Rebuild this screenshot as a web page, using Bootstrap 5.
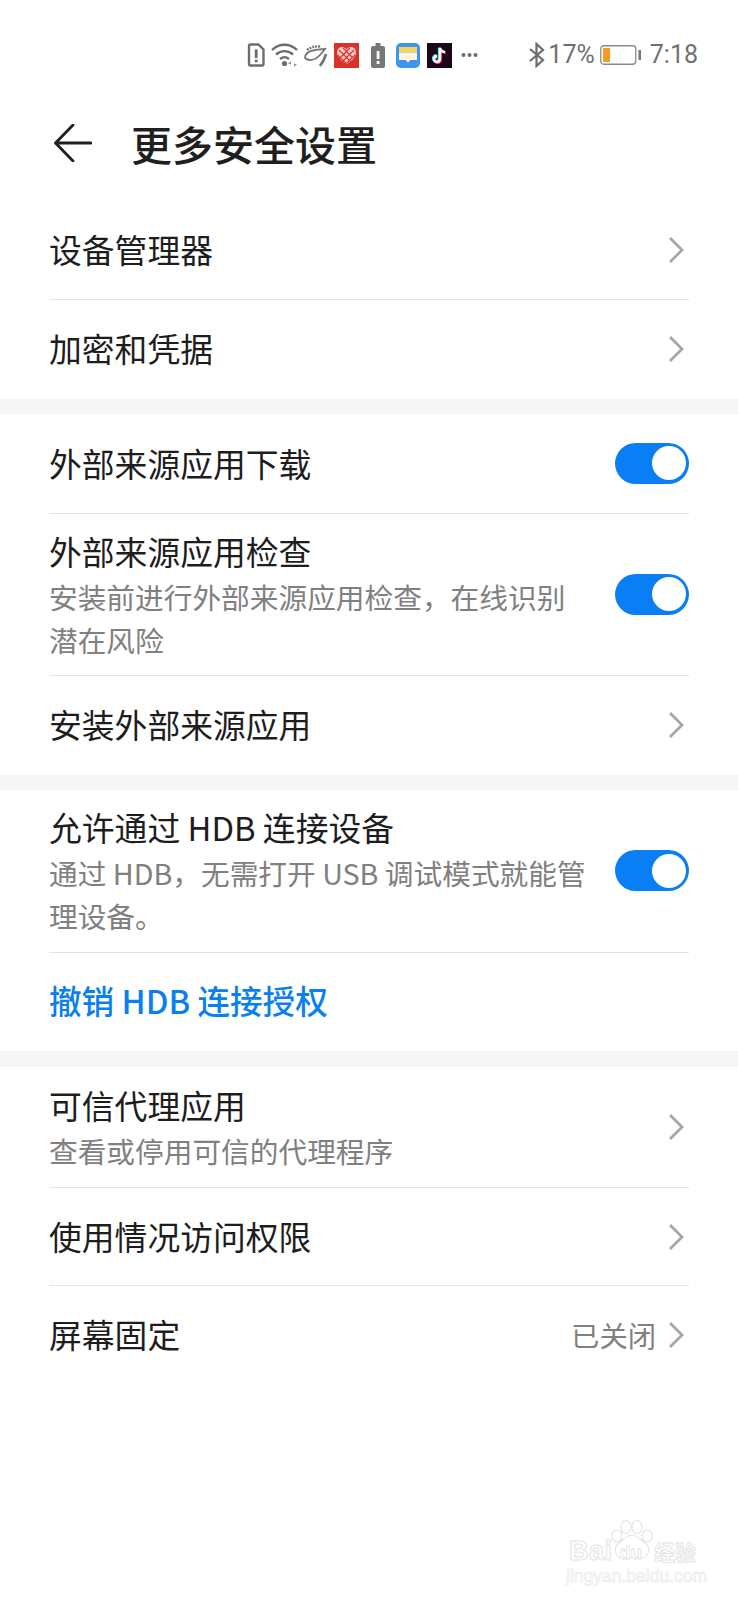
<!DOCTYPE html>
<html lang="zh"><head><meta charset="utf-8">
<link href="https://cdn.jsdelivr.net/npm/bootstrap@5.3.0/dist/css/bootstrap.min.css" rel="stylesheet">
<style>
html,body{background:#fff}
body{width:738px;height:1600px;position:relative;overflow:hidden;font-family:"Noto Sans CJK SC","Roboto",sans-serif;color:#1c1c1c}
.sbar{height:100px;padding:41px 40px 0 0;color:#6d6d6d}
.sbar .sgroup{height:28px}
.stxt{font-family:Roboto,sans-serif;font-size:25px;line-height:28px;color:#707070}
.m3{margin-left:3px}.m4{margin-left:4px}.m5{margin-left:5px}.m6{margin-left:6px}.m7{margin-left:7px}.m9{margin-left:9px}.m11{margin-left:11px}.m12{margin-left:12px}
.grp2{margin-left:51px}
.hdr{height:101px;padding-left:54px;padding-bottom:15px}
.hdr-title{font-size:41px;line-height:56px;font-weight:500;margin-left:39px;color:#1f1f1f}
.grp{padding:0 49px}
.gap-band{height:16px;background:#f6f6f6}
.srow{border-bottom:1px solid #e3e3e3}
.srow:last-child{border-bottom:0}
.rh98{height:98px}.rh99{height:99px}.rh100{height:100px}.rh162{height:162px}.rh163{height:163px}.rh121{height:121px}
.t1{font-size:32.8px;line-height:44px;color:#1d1d1d;margin-top:-2px}
.t2{font-size:28.7px;line-height:43px;color:#808080;margin-top:2px}
.tblk{margin-top:3px}
.tw{width:540px}
.tblk .t1{margin-top:-3px}
.chev{flex:none;margin-right:5px}
.sw{flex:none;width:74px;height:41px;border-radius:21px;background:#0a7ff5;position:relative;margin-top:-1px}
.sw::after{content:"";position:absolute;right:3px;top:3.500px;width:34px;height:34px;border-radius:50%;background:#fff}
.lnk{font-size:32.6px;line-height:44px;font-weight:500;color:#0a7ff0;margin-top:-5px}
.val{font-size:28.3px;color:#808080;margin-right:12px}
.mk{position:absolute;left:566px;top:1518px;width:140px;height:68px}
.mk svg{position:absolute;left:44px;top:1px}
.mk1{position:absolute;left:3px;top:18px;width:46px;font:700 27px/30px "Liberation Sans",sans-serif;color:#fff;-webkit-text-stroke:1px #e4e4e4;letter-spacing:.5px}
.mk4{position:absolute;left:53px;top:24px;font:700 19px/22px "Liberation Sans",sans-serif;color:#fff;-webkit-text-stroke:.8px #e4e4e4}
.mk2{position:absolute;left:88px;top:19px;font-size:21px;line-height:28px;font-weight:700;color:#fff;-webkit-text-stroke:.8px #e2e2e2;white-space:nowrap}
.mk3{position:absolute;left:0;top:48px;font:400 17.5px/20px "Liberation Sans",sans-serif;color:#fff;-webkit-text-stroke:.6px #e6e6e6;white-space:nowrap}
</style></head><body>
<div class="sbar d-flex justify-content-end align-items-start">
 <div class="sgroup d-flex align-items-center">
  <svg width="18" height="24" viewBox="0 0 18 24"><path d="M3.500 1.500h8l5 5v14.500a1.500 1.500 0 0 1-1.500 1.500H3.500A1.500 1.500 0 0 1 2 21V3a1.500 1.500 0 0 1 1.500-1.500z" fill="none" stroke="#6d6d6d" stroke-width="2.400"/><rect x="7.800" y="6.500" width="2.800" height="8.500" fill="#6d6d6d"/><rect x="7.800" y="16.500" width="2.800" height="2.800" fill="#6d6d6d"/></svg>
  <svg class="m6" width="27" height="24" viewBox="0 0 27 24"><g fill="none" stroke="#6d6d6d" stroke-width="2.400"><path d="M1 7c7-7 18-7 25 0"/><path d="M5 11.500c5-4.500 12-4.500 17 0"/><path d="M9 16c3-2.500 6-2.500 9 0"/></g><circle cx="13.500" cy="20.500" r="2.600" fill="#6d6d6d"/><path d="M20 18l-3 3h2.500v3zM23 24l3-3h-2.500v-3z" fill="#8a8a8a"/></svg>
  <svg class="m5" width="25" height="24" viewBox="0 0 25 24"><g fill="none" stroke="#777" stroke-width="1.800"><path d="M4 7c4-3 8-4 14-3.500" stroke-dasharray="2 1" stroke-width="2.400"/><path d="M2 15c0-4 4-7 10-8 4-.5 7-1 10-1-3 4-6 8-10 10-4 1.500-8 1-10-1z"/><path d="M23 11c-1 4-3 8-6 12" stroke-width="2.800"/></g></svg>
  <svg class="m6" width="25" height="25" viewBox="0 0 25 25"><rect width="25" height="25" fill="#d8322a"/><path d="M12.500 21.500C6 17 3 13.500 3 9.500 3 6 5.500 4 8 4c2 0 3.500 1 4.500 2.500C13.500 5 15 4 17 4c2.500 0 5 2 5 5.500 0 4-3 7.500-9.500 12z" fill="#f6c9c4"/><g stroke="#d8322a" stroke-width="1.100" fill="none"><path d="M5 7l13 13M9 5l10 10M3.500 12l9 9M20 7L7 20M16 5L5 16M21 12l-9 9"/></g></svg>
  <svg class="m12" width="14" height="25" viewBox="0 0 14 25"><rect x="4.500" y="0" width="5" height="3" fill="#777"/><rect x="0" y="3" width="14" height="22" rx="2" fill="#777"/><rect x="5.700" y="8" width="2.800" height="8" fill="#fff"/><rect x="5.700" y="18" width="2.800" height="3" fill="#fff"/></svg>
  <svg class="m11" width="24" height="25" viewBox="0 0 24 25"><rect width="24" height="25" rx="5" fill="#3f95ee"/><rect x="3" y="4" width="18" height="5.500" fill="#f5d559"/><path d="M3 9.500h18V17h-6.500L12 19.500 9.500 17H3z" fill="#fdf6dd"/></svg>
  <svg class="m7" width="25" height="25" viewBox="0 0 25 25"><rect width="25" height="25" fill="#1d0716"/><path d="M13 5v11a3 3 0 1 1-3-3M13 5c.5 2.500 2.500 4 5 4" fill="none" stroke="#25f4ee" stroke-width="2.600" transform="translate(-.8 -.6)"/><path d="M13 5v11a3 3 0 1 1-3-3M13 5c.5 2.500 2.500 4 5 4" fill="none" stroke="#fe2c55" stroke-width="2.600" transform="translate(.8 .6)"/><path d="M13 5v11a3 3 0 1 1-3-3M13 5c.5 2.500 2.500 4 5 4" fill="none" stroke="#fff" stroke-width="2.300"/></svg>
  <svg class="m9" width="17" height="6" viewBox="0 0 17 6"><circle cx="2.500" cy="3" r="2" fill="#6d6d6d"/><circle cx="8.500" cy="3" r="2" fill="#6d6d6d"/><circle cx="14.500" cy="3" r="2" fill="#6d6d6d"/></svg>
 </div>
 <div class="sgroup grp2 d-flex align-items-center">
  <svg width="16" height="26" viewBox="0 0 16 26"><path d="M1 7l13 11-6.500 6V2L14 8 1 19" fill="none" stroke="#6d6d6d" stroke-width="2.200"/></svg>
  <span class="stxt m3">17%</span>
  <svg class="m5" width="41" height="20" viewBox="0 0 41 20"><rect x=".75" y=".75" width="35" height="18.500" rx="3" fill="#fff" stroke="#8a8a8a" stroke-width="1.300"/><rect x="3" y="3" width="7" height="14" fill="#f59a23"/><rect x="38.500" y="5" width="2.500" height="10" fill="#777"/></svg>
  <span class="stxt m9">7:18</span>
 </div>
</div>
<div class="hdr d-flex align-items-center">
 <svg width="38" height="38" viewBox="0 0 38 38"><path d="M37 19H2M19 1L1.500 19 19 37" fill="none" stroke="#1f1f1f" stroke-width="2.800" stroke-linecap="round" stroke-linejoin="round"/></svg>
 <div class="hdr-title">更多安全设置</div>
</div>
<div class="grp">
 <div class="srow rh99 d-flex align-items-center justify-content-between"><span class="t1">设备管理器</span><svg class="chev" width="16" height="28" viewBox="0 0 16 28"><path d="M2 2l12 12L2 26" fill="none" stroke="#a6a6a6" stroke-width="2.800"/></svg></div>
 <div class="srow rh98 d-flex align-items-center justify-content-between"><span class="t1">加密和凭据</span><svg class="chev" width="16" height="28" viewBox="0 0 16 28"><path d="M2 2l12 12L2 26" fill="none" stroke="#a6a6a6" stroke-width="2.800"/></svg></div>
</div>
<div class="gap-band"></div>
<div class="grp">
 <div class="srow rh100 d-flex align-items-center justify-content-between"><span class="t1">外部来源应用下载</span><span class="sw"></span></div>
 <div class="srow rh162 d-flex align-items-center justify-content-between"><div class="tblk tw"><div class="t1">外部来源应用检查</div><div class="t2">安装前进行外部来源应用检查，在线识别潜在风险</div></div><span class="sw"></span></div>
 <div class="srow rh98 d-flex align-items-center justify-content-between"><span class="t1">安装外部来源应用</span><svg class="chev" width="16" height="28" viewBox="0 0 16 28"><path d="M2 2l12 12L2 26" fill="none" stroke="#a6a6a6" stroke-width="2.800"/></svg></div>
</div>
<div class="gap-band"></div>
<div class="grp">
 <div class="srow rh163 d-flex align-items-center justify-content-between"><div class="tblk tw"><div class="t1">允许通过 HDB 连接设备</div><div class="t2">通过 HDB，无需打开 USB 调试模式就能管理设备。</div></div><span class="sw"></span></div>
 <div class="srow rh98 d-flex align-items-center"><span class="lnk">撤销 HDB 连接授权</span></div>
</div>
<div class="gap-band"></div>
<div class="grp">
 <div class="srow rh121 d-flex align-items-center justify-content-between"><div class="tblk"><div class="t1">可信代理应用</div><div class="t2">查看或停用可信的代理程序</div></div><svg class="chev" width="16" height="28" viewBox="0 0 16 28"><path d="M2 2l12 12L2 26" fill="none" stroke="#a6a6a6" stroke-width="2.800"/></svg></div>
 <div class="srow rh98 d-flex align-items-center justify-content-between"><span class="t1">使用情况访问权限</span><svg class="chev" width="16" height="28" viewBox="0 0 16 28"><path d="M2 2l12 12L2 26" fill="none" stroke="#a6a6a6" stroke-width="2.800"/></svg></div>
 <div class="srow rh98 d-flex align-items-center justify-content-between"><span class="t1">屏幕固定</span><span class="d-flex align-items-center"><span class="val">已关闭</span><svg class="chev" width="16" height="28" viewBox="0 0 16 28"><path d="M2 2l12 12L2 26" fill="none" stroke="#a6a6a6" stroke-width="2.800"/></svg></span></div>
</div>
<div class="mk">
 <svg width="44" height="44" viewBox="0 0 44 44"><g fill="#fff" stroke="#e4e4e4" stroke-width="1.200"><ellipse cx="16" cy="8" rx="5" ry="6.500"/><ellipse cx="27" cy="8" rx="5" ry="6.500"/><ellipse cx="7" cy="17" rx="5" ry="6"/><ellipse cx="37" cy="17" rx="5" ry="6"/><path d="M22 16c6 0 8 5 13 8 6 4 4 15-3 15-4 0-6-1-10-1s-6 1-10 1c-7 0-9-11-3-15 5-3 7-8 13-8z"/></g></svg>
 <div class="mk1">Bai</div>
 <div class="mk4">du</div>
 <div class="mk2">经验</div>
 <div class="mk3">jingyan.baidu.com</div>
</div>
</body></html>
